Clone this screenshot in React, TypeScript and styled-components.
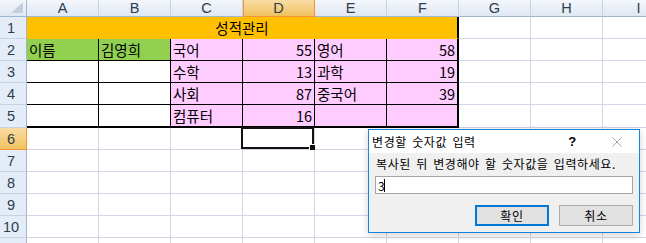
import React from 'react'
import styled, { createGlobalStyle } from 'styled-components'

const GRID = '#d0d7e5'
const HEAD_LINE = '#9eb6ce'
const HEAD_SEP = '#c5d3e4'
const ORANGE = '#ffc000'
const GREEN = '#92d050'
const PINK = '#ffccff'

type Edge = 'grid' | 'thin' | 'thick' | 'fill'

const edge = (e: Edge, bg: string) => {
  if (e === 'thick') return '2px solid #000'
  if (e === 'thin') return '1px solid #000'
  if (e === 'fill') return `1px solid ${bg}`
  return `1px solid ${GRID}`
}

const GlobalStyle = createGlobalStyle`
  html, body {
    margin: 0;
    padding: 0;
    background: #fff;
  }
  body {
    width: 646px;
    height: 243px;
    overflow: hidden;
    font-family: "Noto Sans CJK KR", sans-serif;
  }
`

const Sheet = styled.div`
  position: relative;
  width: 646px;
  height: 243px;
  overflow: hidden;
  display: grid;
  grid-template-columns: 27px repeat(9, 72px);
  grid-template-rows: 17px repeat(4, 22px) 23px repeat(6, 22px);
`

const Corner = styled.div`
  position: relative;
  box-sizing: border-box;
  background: linear-gradient(to bottom, #f4f7fc, #dfe7f2);
  border-right: 1px solid ${HEAD_LINE};
  border-bottom: 1px solid ${HEAD_LINE};

  &::after {
    content: '';
    position: absolute;
    right: 3px;
    bottom: 3px;
    width: 0;
    height: 0;
    border-left: 12px solid transparent;
    border-bottom: 11px solid #c3cfde;
  }
`

const ColHead = styled.div<{ $active?: boolean }>`
  box-sizing: border-box;
  display: flex;
  align-items: center;
  justify-content: center;
  font-family: "Liberation Sans", Arial, sans-serif;
  font-size: 14.5px;
  color: #2f3d4c;
  background: ${({ $active }) =>
    $active ? 'linear-gradient(to bottom, #f9dca4, #f1c15f)' : 'linear-gradient(to bottom, #f4f7fc, #dfe7f2)'};
  border-right: 1px solid ${({ $active }) => ($active ? '#f29536' : HEAD_SEP)};
  border-bottom: 1px solid ${({ $active }) => ($active ? '#f29536' : HEAD_LINE)};
  ${({ $active }) => ($active ? 'box-shadow: inset 1px 0 0 #f29536;' : '')}
`

const RowHead = styled.div<{ $active?: boolean }>`
  box-sizing: border-box;
  display: flex;
  align-items: center;
  justify-content: center;
  padding-right: 4px;
  font-family: "Liberation Sans", Arial, sans-serif;
  font-size: 14.5px;
  color: #2f3d4c;
  background: ${({ $active }) => ($active ? 'linear-gradient(to bottom, #f9dca4, #f1c15f)' : '#e4ecf7')};
  border-right: 1px solid ${({ $active }) => ($active ? '#f29536' : HEAD_LINE)};
  border-bottom: 1px solid ${({ $active }) => ($active ? '#f29536' : HEAD_SEP)};
`

const Cell = styled.div<{ $bg: string; $right: Edge; $bottom: Edge; $align: string; $span: number }>`
  position: relative;
  box-sizing: border-box;
  grid-column: span ${({ $span }) => $span};
  display: flex;
  align-items: center;
  justify-content: ${({ $align }) => $align};
  padding: 0 2px 0 2px;
  background: ${({ $bg }) => $bg};
  border-right: ${({ $right, $bg }) => edge($right, $bg)};
  border-bottom: ${({ $bottom, $bg }) => edge($bottom, $bg)};
  font-size: 14.5px;
  color: #000;
  white-space: nowrap;
`

const Selection = styled.div`
  position: absolute;
  left: -2px;
  top: -1px;
  right: 0;
  bottom: 0;
  border: 2px solid #111;
`

const FillHandle = styled.div`
  position: absolute;
  right: -3px;
  bottom: -3px;
  width: 5px;
  height: 5px;
  background: #111;
  border: 1px solid #fff;
  border-width: 1px 0 0 1px;
`

const Dialog = styled.div`
  position: absolute;
  left: 368px;
  top: 129px;
  width: 272px;
  height: 104px;
  box-sizing: border-box;
  border: 1px solid #1883d7;
  background: #f0f0f0;
  display: flex;
  flex-direction: column;
  font-family: "Noto Sans CJK KR", sans-serif;
  font-size: 12px;
  letter-spacing: 0.6px;
  word-spacing: 2px;
  color: #000;
  box-shadow: 0 2px 8px rgba(0, 0, 0, 0.18);
`

const TitleBar = styled.div`
  height: 23px;
  flex: none;
  background: #fff;
  display: flex;
  align-items: center;
  padding-left: 3px;
`

const TitleText = styled.div`
  flex: 1;
  line-height: 16px;
`

const TitleButton = styled.div<{ $w: number }>`
  width: ${({ $w }) => $w}px;
  height: 23px;
  display: flex;
  align-items: center;
  justify-content: center;
  font-family: "Liberation Sans", Arial, sans-serif;
  font-weight: bold;
  font-size: 13px;
`

const Body = styled.div`
  flex: 1;
  display: flex;
  flex-direction: column;
  padding: 3px 6px 6px 6px;
`

const Label = styled.div`
  line-height: 16px;
  padding-left: 1px;
`

const Input = styled.div`
  margin-top: 4px;
  height: 18px;
  box-sizing: border-box;
  border: 1px solid #a4a4a4;
  background: #fff;
  display: flex;
  align-items: center;
  padding-left: 2px;
  font-size: 12px;
`

const Caret = styled.span`
  display: inline-block;
  width: 1px;
  height: 13px;
  margin-left: -1px;
  background: #000;
`

const ButtonRow = styled.div`
  margin-top: 11px;
  display: flex;
  justify-content: flex-end;
  gap: 10px;
`

const Button = styled.div<{ $primary?: boolean }>`
  width: 74px;
  height: 21px;
  box-sizing: border-box;
  display: flex;
  align-items: center;
  justify-content: center;
  background: #e1e1e1;
  border: ${({ $primary }) => ($primary ? '2px solid #0078d7' : '1px solid #adadad')};
  font-size: 12px;
`

const COLS = ['A', 'B', 'C', 'D', 'E', 'F', 'G', 'H', 'I']

const TABLE: (string | number)[][] = [
  ['이름', '김영희', '국어', 55, '영어', 58],
  ['', '', '수학', 13, '과학', 19],
  ['', '', '사회', 87, '중국어', 39],
  ['', '', '컴퓨터', 16, '', ''],
]

function CloseIcon() {
  return (
    <svg width="10" height="10" viewBox="0 0 10 10">
      <path d="M0.5 0.5 L9.5 9.5 M9.5 0.5 L0.5 9.5" stroke="#a6a6a6" strokeWidth="1" fill="none" />
    </svg>
  )
}

function GridCells({ from }: { from: number }) {
  return (
    <>
      {COLS.slice(from).map((c) => (
        <Cell key={c} $bg="#fff" $right="grid" $bottom="grid" $align="flex-start" $span={1} />
      ))}
    </>
  )
}

export default function App() {
  return (
    <>
      <GlobalStyle />
      <Sheet>
        <Corner />
        {COLS.map((c) => (
          <ColHead key={c} $active={c === 'D'}>
            {c}
          </ColHead>
        ))}

        <RowHead>1</RowHead>
        <Cell $bg={ORANGE} $right="thick" $bottom="fill" $align="center" $span={6}>
          성적관리
        </Cell>
        <GridCells from={6} />

        {TABLE.map((row, r) => (
          <React.Fragment key={r}>
            <RowHead>{r + 2}</RowHead>
            {row.map((v, c) => {
              const bg = r === 0 && c < 2 ? GREEN : c < 2 ? '#fff' : PINK
              return (
                <Cell
                  key={c}
                  $bg={bg}
                  $right={c === 5 ? 'thick' : 'thin'}
                  $bottom={r === 3 ? 'thick' : 'thin'}
                  $align={typeof v === 'number' ? 'flex-end' : 'flex-start'}
                  $span={1}
                >
                  {v}
                </Cell>
              )
            })}
            <GridCells from={6} />
          </React.Fragment>
        ))}

        <RowHead $active>6</RowHead>
        {COLS.map((c) => (
          <Cell key={c} $bg="#fff" $right="grid" $bottom="grid" $align="flex-start" $span={1}>
            {c === 'D' && (
              <Selection>
                <FillHandle />
              </Selection>
            )}
          </Cell>
        ))}

        {[7, 8, 9, 10].map((n) => (
          <React.Fragment key={n}>
            <RowHead>{n}</RowHead>
            <GridCells from={0} />
          </React.Fragment>
        ))}
        {/* row 11 is only a sliver at the bottom edge */}
        <RowHead />
        <GridCells from={0} />

        <Dialog>
          <TitleBar>
            <TitleText>변경할 숫자값 입력</TitleText>
            <TitleButton $w={45}>?</TitleButton>
            <TitleButton $w={44}>
              <CloseIcon />
            </TitleButton>
          </TitleBar>
          <Body>
            <Label>복사된 뒤 변경해야 할 숫자값을 입력하세요.</Label>
            <Input>
              3<Caret />
            </Input>
            <ButtonRow>
              <Button $primary>확인</Button>
              <Button>취소</Button>
            </ButtonRow>
          </Body>
        </Dialog>
      </Sheet>
    </>
  )
}
